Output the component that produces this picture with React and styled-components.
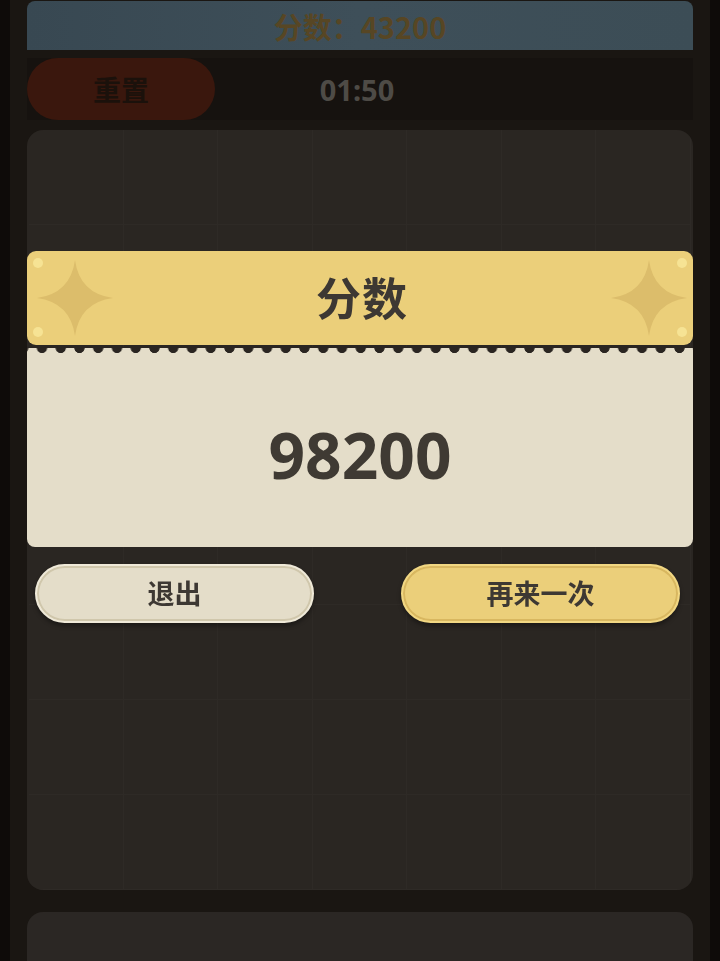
import React from "react";
import styled, { createGlobalStyle } from "styled-components";

const Global = createGlobalStyle`
  html, body { margin: 0; padding: 0; background: #0e0b09; }
  body { font-family: "Noto Sans", "Noto Sans CJK SC", sans-serif; overflow: hidden; }
  * { box-sizing: border-box; }
`;

const Frame = styled.div`
  margin: 0 10px;
  min-height: 961px;
  background: #1a1612;
  padding: 0 17px;
  display: flex;
  flex-direction: column;
`;

const ScoreBar = styled.div`
  margin-top: 1px;
  height: 49px;
  border-radius: 8px 8px 0 0;
  background: linear-gradient(90deg, #384852, #3e4f59 50%, #3c4d56);
  display: flex;
  align-items: center;
  justify-content: center;
  font-family: "Noto Sans CJK SC", sans-serif;
  font-weight: 700;
  font-size: 29px;
  color: #574624;
`;

const TopRow = styled.div`
  height: 62px;
  margin-top: 8px;
  display: flex;
  align-items: center;
  background: #16120f;
`;

const ResetPill = styled.div`
  width: 188px;
  height: 62px;
  border-radius: 31px;
  background: #3a170d;
  display: flex;
  align-items: center;
  justify-content: center;
  font-family: "Noto Sans CJK SC", sans-serif;
  font-weight: 700;
  font-size: 28px;
  color: #1b110b;
`;

const Timer = styled.div`
  width: 284px;
  text-align: center;
  font-family: "Noto Sans", sans-serif;
  font-weight: 700;
  font-size: 29px;
  color: #4e4b46;
`;

const Board = styled.div`
  margin-top: 10px;
  height: 760px;
  border-radius: 16px;
  background: #2a2622;
  display: grid;
  grid-template-columns: repeat(7, 1fr);
  grid-template-rows: repeat(8, 1fr);
  padding: 0 2px;
  overflow: hidden;
`;

const Cell = styled.div`
  border-right: 1px solid rgba(255, 255, 255, 0.02);
  border-bottom: 1px solid rgba(255, 255, 255, 0.02);
`;

const BottomPanel = styled.div`
  margin-top: 22px;
  height: 80px;
  border-radius: 16px 16px 0 0;
  background: #2b2724;
`;

const Overlay = styled.div`
  position: fixed;
  inset: 0;
  padding: 251px 27px 0;
  display: flex;
  flex-direction: column;
`;

const Banner = styled.div`
  position: relative;
  height: 94px;
  border-radius: 9px;
  background: #ebcf7a;
  display: flex;
  align-items: center;
  justify-content: space-between;
  padding: 0 6px 0 10px;
`;

const BannerTitle = styled.div`
  font-family: "Noto Sans CJK SC", sans-serif;
  font-weight: 700;
  font-size: 45px;
  line-height: 1;
  color: #3d3833;
  letter-spacing: 1px;
  margin-top: -3px;
`;

const Star = styled.svg`
  width: 76px;
  height: 76px;
  flex: none;
`;

const Dot = styled.span`
  position: absolute;
  width: 10px;
  height: 10px;
  border-radius: 50%;
  background: #f6e394;
  ${(p) => (p.$top ? "top: 7px;" : "bottom: 8px;")}
  ${(p) => (p.$left ? "left: 6px;" : "right: 6px;")}
`;

const ScorePanel = styled.div`
  margin-top: 2px;
  height: 200px;
  border-radius: 0 0 8px 8px;
  background: linear-gradient(#2a2521, #2a2521) 0 0 / 100% 1px no-repeat,
    radial-gradient(circle at 50% 1px, #2a2521 4.8px, transparent 5.4px)
      5.6px 0 / 18.75px 10px repeat-x,
    #e4ddc9;
  display: flex;
  align-items: center;
  justify-content: center;
  padding-top: 16px;
`;

const ScoreValue = styled.div`
  font-family: "Noto Sans", sans-serif;
  font-weight: 700;
  font-size: 64px;
  line-height: 1;
  color: #3f3a33;
`;

const Buttons = styled.div`
  margin-top: 17px;
  display: flex;
  justify-content: space-between;
  padding: 0 13px 0 8px;
`;

const Btn = styled.button`
  width: 279px;
  height: 59px;
  border-radius: 30px;
  border: 2px solid ${(p) => (p.$gold ? "#f1d783" : "#efe9d8")};
  background: ${(p) => (p.$gold ? "#ebcf7a" : "#e4ddc9")};
  box-shadow: inset 0 0 0 2px ${(p) => (p.$gold ? "#d8b760" : "#d0c7ac")},
    0 3px 4px rgba(0, 0, 0, 0.35);
  font-family: "Noto Sans CJK SC", sans-serif;
  font-weight: 700;
  font-size: 27px;
  color: #3d3833;
  display: flex;
  align-items: center;
  justify-content: center;
  padding: 0 0 3px;
`;

const StarIcon = () => (
  <Star viewBox="0 0 100 100">
    <path
      d="M50 0 Q56 44 100 50 Q56 56 50 100 Q44 56 0 50 Q44 44 50 0 Z"
      fill="#dcbd6b"
    />
  </Star>
);

export default function App() {
  const cells = Array.from({ length: 56 });
  return (
    <>
      <Global />
      <Frame>
        <ScoreBar>分数：43200</ScoreBar>
        <TopRow>
          <ResetPill>重置</ResetPill>
          <Timer>01:50</Timer>
        </TopRow>
        <Board>
          {cells.map((_, i) => (
            <Cell key={i} />
          ))}
        </Board>
        <BottomPanel />
      </Frame>
      <Overlay>
        <Banner>
          <Dot $top $left />
          <Dot $left />
          <Dot $top />
          <Dot />
          <StarIcon />
          <BannerTitle>分数</BannerTitle>
          <StarIcon />
        </Banner>
        <ScorePanel>
          <ScoreValue>98200</ScoreValue>
        </ScorePanel>
        <Buttons>
          <Btn>退出</Btn>
          <Btn $gold>再来一次</Btn>
        </Buttons>
      </Overlay>
    </>
  );
}
